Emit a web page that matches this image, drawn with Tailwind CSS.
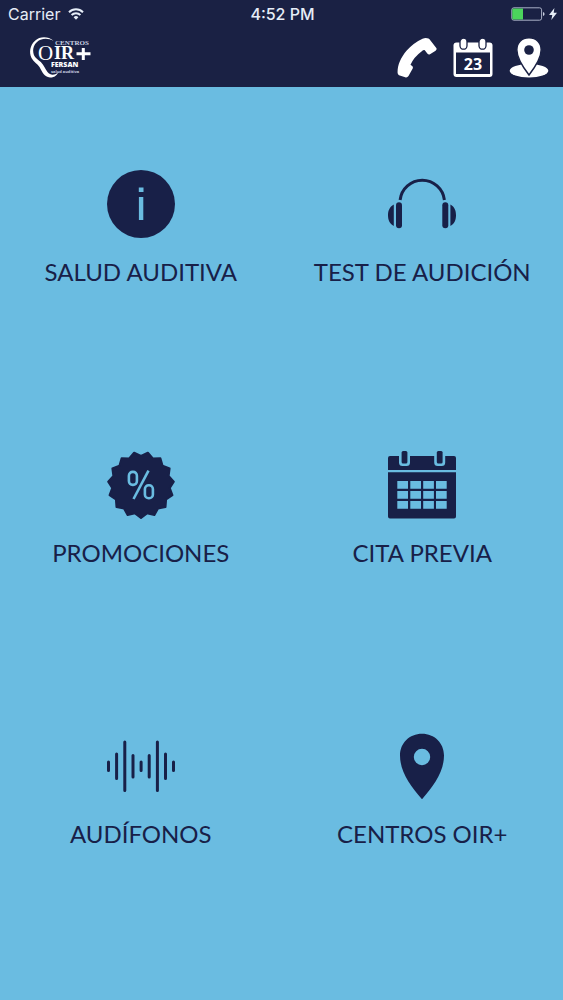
<!DOCTYPE html>
<html lang="es">
<head>
<meta charset="utf-8">
<meta name="viewport" content="width=device-width, initial-scale=1">
<title>Centros OIR+ Fersan</title>
<script src="https://cdn.jsdelivr.net/npm/@tailwindcss/browser@4"></script>
</head>
<body class="min-h-screen bg-[#6abce1] text-[#182048] font-['Lato',sans-serif]">
<header class="bg-[#1a2144] text-white">
  <div class="grid h-7 grid-cols-3 items-center pl-2 pr-1.5 font-['Inter',sans-serif] text-[#e6edf7]">
    <div class="flex items-center gap-2">
      <span class="text-base">Carrier</span>
      <svg class="h-3 w-4" viewBox="0 0 16 12" fill="none" stroke="currentColor" stroke-width="2" aria-hidden="true"><path d="M1 4.2a10 10 0 0 1 14 0M3.6 7a6.2 6.2 0 0 1 8.8 0"/><path d="M5.6 9.2a3.4 3.4 0 0 1 4.8 0L8 11.8Z" fill="currentColor" stroke="none"/></svg>
    </div>
    <span class="text-center text-base font-medium">4:52 PM</span>
    <div class="flex items-center justify-end gap-1">
      <svg class="h-3.5 w-[34px]" viewBox="0 0 34 14" aria-hidden="true"><rect x=".8" y=".8" width="29.8" height="12.4" rx="2" fill="none" stroke="#a9b0c6"/><path d="M2.5 1.5H12v11H2.500q-1.200 0-1.200-1.200V2.700q0-1.200 1.200-1.200Z" fill="#4bd45c"/><path d="M32 5q1.600.4 1.600 2T32 9Z" fill="#c9cfdf"/></svg>
      <svg class="h-3 w-2" viewBox="0 0 8 12" fill="currentColor" aria-hidden="true"><path d="M5.400 0 0 6.900h3.300L2.300 12 8 4.800H4.700Z"/></svg>
    </div>
  </div>
  <div class="flex h-[59px] items-center justify-between pl-7 pr-3.5">
    <a href="#" aria-label="Centros OIR+ Fersan, salud auditiva">
      <svg class="h-[43px] w-16" viewBox="0 0 64 43" fill="#fff">
        <path d="M25.500 4.800C20 .2 12 .2 7 4.800C2 9.400.8 16.500 3.500 22C5.300 25.700 9.500 27.700 11.500 31C14.500 36.300 16 40.800 22 41.500C26 41.800 29 39.300 30 36.500C26.500 39.500 22.500 39.700 19.500 36C17 32.500 16 29.200 12.800 26C9.500 23 6 21.500 5.300 16.500C4.400 10.500 8 5.500 12.500 3.700C17 2 21.500 2.700 25.500 4.800Z"/>
        <text x="27" y="9" font-family="Liberation Serif, serif" font-size="7" font-weight="bold" fill="#c9cfe0">CENTROS</text>
        <text x="10" y="24" font-family="Liberation Serif, serif" font-size="21">O</text>
        <text x="26" y="23" font-family="Liberation Serif, serif" font-size="18" font-weight="bold">IR</text>
        <path d="M48.500 16.300h5.300V12h3v4.300H62.500v3h-5.700V24h-3v-4.700h-5.300Z"/>
        <text x="23" y="31" font-family="Open Sans, sans-serif" font-size="7" font-weight="800">FERSAN</text>
        <text x="23" y="37" font-family="Open Sans, sans-serif" font-size="4" font-weight="bold" fill="#c9cfe0">salud auditiva</text>
      </svg>
    </a>
    <nav class="flex gap-4" aria-label="Accesos rápidos">
      <button type="button" aria-label="Llamar"><svg class="size-10" viewBox="0 0 40 40" fill="#fff"><path d="M25.500.7Q28.500-.4 31.500.5L32.500 1.200L39.300 10Q40.200 11.600 38.600 12.700L33 16.200Q31.500 16.800 30.300 15.500L27.800 12.200Q26.500 11.800 24.500 13.500Q17 19 13.500 26.700Q14.500 27.700 15.200 28Q16.300 29 15.700 30.500L11.500 38Q10.200 40 8.200 39.300L2 37.200Q.8 36.600.6 35C.2 27.500 3.500 20 9.500 12.700Q17 4.500 25.500.7Z"/></svg></button>
      <button type="button" aria-label="Calendario"><svg class="size-10" viewBox="0 0 40 40"><rect x="0.500" y="4.500" width="39" height="34.500" rx="3" fill="#fff"/><path d="M3 14.500h34V36H3Z" fill="#1a2144"/><rect x="7" y=".2" width="7" height="11" rx="3.500" fill="#fff" stroke="#1a2144" stroke-width="1.300"/><rect x="26" y=".2" width="7" height="11" rx="3.500" fill="#fff" stroke="#1a2144" stroke-width="1.300"/><text x="20" y="31.500" text-anchor="middle" font-family="Open Sans, sans-serif" font-size="16" font-weight="bold" fill="#fff">23</text></svg></button>
      <button type="button" aria-label="Ubicación"><svg class="size-10" viewBox="0 0 40 40"><ellipse cx="20" cy="32.800" rx="19.300" ry="6.700" fill="#fff"/><path d="M20-.3C12.500-.3 7.800 5 7.800 11.800C7.800 20 13 28 20 37C27 28 32.200 20 32.200 11.800C32.200 5 27.500-.3 20-.3Z" fill="#fff" stroke="#1a2144" stroke-width="1.500"/><circle cx="20" cy="12" r="4.800" fill="#1a2144"/></svg></button>
    </nav>
  </div>
</header>
<main class="grid auto-rows-[281px] grid-cols-2 text-2xl leading-7">
  <a href="#" class="flex flex-col items-center justify-center gap-5">
    <svg class="size-[68px]" viewBox="0 0 68 68" aria-hidden="true"><circle cx="34" cy="34" r="34" fill="currentColor"/><path d="M31.800 17.500h4.700V22h-4.700ZM31.900 27h4.400v23h-4.400Z" fill="#6abce1"/></svg>
    <span>SALUD AUDITIVA</span>
  </a>
  <a href="#" class="flex flex-col items-center justify-center gap-5">
    <svg class="size-[68px]" viewBox="0 0 68 68" fill="currentColor" aria-hidden="true"><path d="M12.100 30A22.300 22.300 0 0 1 56.400 30" fill="none" stroke="currentColor" stroke-width="3"/><rect x="8" y="32.300" width="6" height="26" rx="3"/><rect x="54.300" y="32.300" width="6" height="26" rx="3"/><path d="M5.800 34.500C1.500 36.800 0 41 0 45.300S1.500 53.800 5.800 56ZM62.400 34.500C66.700 36.800 68 41 68 45.300S66.700 53.800 62.400 56Z"/></svg>
    <span>TEST DE AUDICIÓN</span>
  </a>
  <a href="#" class="flex flex-col items-center justify-center gap-5">
    <svg class="size-[68px]" viewBox="0 0 68 68" aria-hidden="true"><path fill="currentColor" stroke="currentColor" stroke-width="2" stroke-linejoin="round" d="M34 67L40 62.400L47.400 64.100L51 57.500L58.500 56.100L59.100 48.500L65.400 44.200L62.800 37L66.800 30.600L61.600 25L62.600 17.500L55.500 14.600L53.400 7.300L45.800 7.500L40.900 1.700L34 5L27.100 1.700L22.200 7.500L14.600 7.300L12.500 14.600L5.400 17.500L6.400 25L1.200 30.600L5.200 37L2.600 44.200L8.900 48.500L9.500 56.100L17 57.500L20.600 64.100L28 62.400Z"/><g fill="none" stroke="#6abce1" stroke-width="2.600"><rect x="21.900" y="20.900" width="8" height="13" rx="3.800"/><rect x="37.900" y="34.200" width="8" height="13" rx="3.800"/><path d="M41.500 19.700L26.500 48"/></g></svg>
    <span>PROMOCIONES</span>
  </a>
  <a href="#" class="flex flex-col items-center justify-center gap-5">
    <svg class="size-[68px]" viewBox="0 0 68 68" aria-hidden="true"><path d="M2 5h64q2 0 2 2v12H0V7q0-2 2-2ZM0 21.300h68V65.500q0 2-2 2H2q-2 0-2-2Z" fill="currentColor"/><path d="M11 3h11v8.500q0 3.500-3.500 3.500h-4q-3.500 0-3.500-3.500ZM46.200 3h11v8.500q0 3.500-3.500 3.500h-4q-3.500 0-3.500-3.500Z" fill="#6abce1"/><rect x="13.600" y="0" width="5.800" height="12.500" rx="1.500" fill="currentColor"/><rect x="48.800" y="0" width="5.800" height="12.500" rx="1.500" fill="currentColor"/><path fill="#6abce1" d="M9.300 30h10.700v7.700H9.300ZM22.300 30H33v7.700H22.300ZM35.200 30h10.700v7.700H35.200ZM48 30h10.700v7.700H48ZM9.300 40h10.700v7.700H9.300ZM22.300 40H33v7.700H22.300ZM35.200 40h10.700v7.700H35.200ZM48 40h10.700v7.700H48ZM9.300 50h10.700v7.700H9.300ZM22.300 50H33v7.700H22.300ZM35.200 50h10.700v7.700H35.200ZM48 50h10.700v7.700H48Z"/></svg>
    <span>CITA PREVIA</span>
  </a>
  <a href="#" class="flex flex-col items-center justify-center gap-5">
    <svg class="size-[68px]" viewBox="0 0 68 68" fill="none" stroke="currentColor" stroke-width="3" stroke-linecap="round" aria-hidden="true"><path d="M1.500 30v8.500M9.600 22v24.500M17.800 10v48.500M26 23.500v21.500M34.100 30v8.500M42.200 23.500v21.500M50.400 10v48.500M58.500 22v24.500M66.500 30v8.500"/></svg>
    <span>AUDÍFONOS</span>
  </a>
  <a href="#" class="flex flex-col items-center justify-center gap-5">
    <svg class="size-[68px]" viewBox="0 0 68 68" aria-hidden="true"><path fill="currentColor" fill-rule="evenodd" d="M34 1.700C21.500 1.700 12 11 12 23.500C12 39.500 22 53.500 34 67.300C46 53.500 56 39.500 56 23.500C56 11 46.500 1.700 34 1.700ZM34 16.800a8.200 8.200 0 1 1 0 16.400a8.200 8.200 0 0 1 0-16.400Z"/></svg>
    <span>CENTROS OIR+</span>
  </a>
</main>
</body>
</html>
